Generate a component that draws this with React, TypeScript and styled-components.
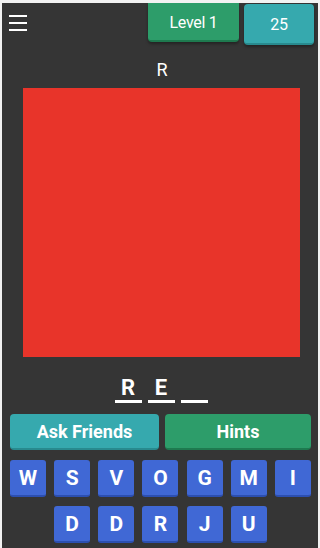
import styled, { createGlobalStyle } from 'styled-components';

const COLOR = {
  BG: '#353535',
  RED: '#e8342a',
  GREEN: '#2d9d6a',
  GREEN_DARK: '#1e7a4f',
  TEAL: '#36a9ae',
  TEAL_DARK: '#288a8e',
  BLUE: '#4068d5',
  BLUE_DARK: '#2c4fb0',
};

const GlobalStyle = createGlobalStyle`
  html, body {
    margin: 0;
    padding: 0;
    background: #f2f2f2;
  }

  * {
    box-sizing: border-box;
  }
`;

const StyledFrame = styled.div`
  width: 320px;
  height: 548px;
  padding: 3px 2px 0 2px;
`;

const StyledScreen = styled.main`
  height: 100%;
  background: ${COLOR.BG};
  display: flex;
  flex-direction: column;
  font-family: Roboto, 'Liberation Sans', sans-serif;
  color: #fff;
  overflow: hidden;
`;

const StyledHeader = styled.header`
  height: 45px;
  display: flex;
  align-items: flex-start;
`;

const StyledMenu = styled.button`
  margin: 11px 0 0 7px;
  padding: 0;
  width: 18px;
  height: 18px;
  border: none;
  background: none;
  display: flex;
`;

const StyledStats = styled.div`
  margin-left: auto;
  margin-right: 4px;
  display: flex;
  align-items: flex-start;
  gap: 5px;
`;

const StyledStat = styled.div<{ $bg: string; $shade: string; $width: number; $top: number; $size: number }>`
  width: ${(p) => p.$width}px;
  height: ${(p) => (p.$top === 0 ? 39 : 41)}px;
  margin-top: ${(p) => p.$top}px;
  padding-top: 2px;
  background: ${(p) => p.$bg};
  border-bottom: 2px solid ${(p) => p.$shade};
  border-radius: ${(p) => (p.$top === 0 ? '0 0 4px 4px' : '4px')};
  box-shadow: 0 2px 3px rgba(0, 0, 0, 0.35);
  display: flex;
  align-items: center;
  justify-content: center;
  font-size: ${(p) => p.$size}px;
  letter-spacing: -0.3px;
`;

const StyledClue = styled.h2`
  margin: 11px 0 0;
  font-size: 18px;
  line-height: 21px;
  font-weight: 400;
  text-align: center;
  padding-left: 4px;
`;

const StyledPicture = styled.div`
  margin: 8px 0 0 21px;
  width: 277px;
  height: 269px;
  background: ${COLOR.RED};
`;

const StyledSlots = styled.div`
  margin-top: 18px;
  display: flex;
  justify-content: center;
  gap: 6px;
  padding-left: 2px;
`;

const StyledSlot = styled.div`
  width: 27px;
  display: flex;
  flex-direction: column;
  align-items: center;
`;

const StyledSlotLetter = styled.span`
  height: 25px;
  font-size: 22px;
  line-height: 25px;
  font-weight: 700;
`;

const StyledSlotLine = styled.span`
  width: 100%;
  height: 3px;
  background: #fff;
`;

const StyledActions = styled.div`
  margin-top: 11px;
  padding: 0 7px 0 8px;
  display: flex;
  gap: 6px;
`;

const StyledAction = styled.button<{ $bg: string; $shade: string; $grow: number }>`
  flex: ${(p) => p.$grow} 1 0;
  height: 36px;
  padding: 0;
  border: none;
  border-bottom: 2px solid ${(p) => p.$shade};
  border-radius: 4px;
  background: ${(p) => p.$bg};
  color: #fff;
  font-family: Roboto, 'Liberation Sans', sans-serif;
  font-size: 18px;
  font-weight: 700;
`;

const StyledKeyboard = styled.div`
  margin-top: 10px;
  padding: 0 7px 0 8px;
  display: grid;
  grid-template-columns: repeat(7, 36px);
  justify-content: space-between;
  row-gap: 9px;
`;

const StyledKey = styled.button<{ $col?: number }>`
  grid-column: ${(p) => (p.$col ? `${p.$col}` : 'auto')};
  width: 36px;
  height: 37px;
  padding: 0;
  border: none;
  border-bottom: 2px solid ${COLOR.BLUE_DARK};
  border-radius: 3px;
  background: ${COLOR.BLUE};
  color: #fff;
  font-family: Roboto, 'Liberation Sans', sans-serif;
  font-size: 21px;
  font-weight: 700;
`;

const answer = ['R', 'E', ''];
const keysTop = ['W', 'S', 'V', 'O', 'G', 'M', 'I'];
const keysBottom = ['D', 'D', 'R', 'J', 'U'];

const MenuIcon = () => (
  <svg width="18" height="18" viewBox="0 0 18 18">
    <rect x="0" y="1" width="18" height="2" fill="#fff" />
    <rect x="0" y="8" width="18" height="2" fill="#fff" />
    <rect x="0" y="15" width="18" height="2" fill="#fff" />
  </svg>
);

const App = () => {
  return (
    <>
      <GlobalStyle />
      <StyledFrame>
        <StyledScreen>
          <StyledHeader>
            <StyledMenu aria-label="menu">
              <MenuIcon />
            </StyledMenu>
            <StyledStats>
              <StyledStat $bg={COLOR.GREEN} $shade={COLOR.GREEN_DARK} $width={91} $top={0} $size={16}>
                Level 1
              </StyledStat>
              <StyledStat $bg={COLOR.TEAL} $shade={COLOR.TEAL_DARK} $width={70} $top={1} $size={16}>
                25
              </StyledStat>
            </StyledStats>
          </StyledHeader>
          <StyledClue>R</StyledClue>
          <StyledPicture />
          <StyledSlots>
            {answer.map((letter, i) => (
              <StyledSlot key={i}>
                <StyledSlotLetter>{letter}</StyledSlotLetter>
                <StyledSlotLine />
              </StyledSlot>
            ))}
          </StyledSlots>
          <StyledActions>
            <StyledAction $bg={COLOR.TEAL} $shade={COLOR.TEAL_DARK} $grow={149}>
              Ask Friends
            </StyledAction>
            <StyledAction $bg={COLOR.GREEN} $shade={COLOR.GREEN_DARK} $grow={146}>
              Hints
            </StyledAction>
          </StyledActions>
          <StyledKeyboard>
            {keysTop.map((k, i) => (
              <StyledKey key={`t${i}`}>{k}</StyledKey>
            ))}
            {keysBottom.map((k, i) => (
              <StyledKey key={`b${i}`} $col={i + 2}>
                {k}
              </StyledKey>
            ))}
          </StyledKeyboard>
        </StyledScreen>
      </StyledFrame>
    </>
  );
};

export default App;
